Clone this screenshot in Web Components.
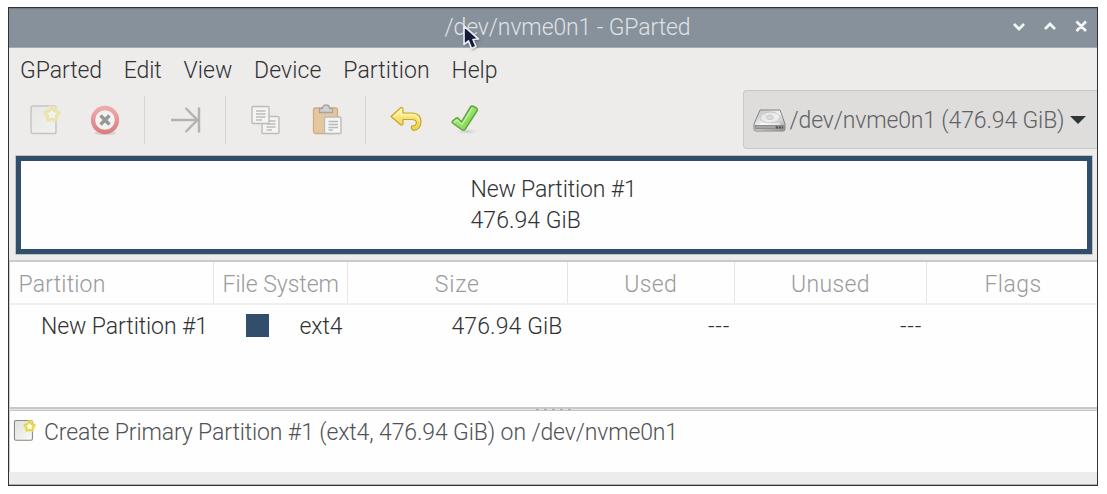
<!DOCTYPE html>
<html lang="en">
<head>
<meta charset="utf-8">
<title>GParted</title>
<style>
body{margin:0;background:#fff;font-family:Roboto,"Liberation Sans",sans-serif;font-weight:300;font-size:23px;color:#303234;width:1107px;height:494px;overflow:hidden}
gp-window{margin:7px 0 0 8px}
</style>
</head>
<body>
<gp-window>
  <gp-titlebar slot="title"></gp-titlebar>
  <gp-menubar></gp-menubar>
  <gp-toolbar></gp-toolbar>
  <gp-diskmap></gp-diskmap>
  <gp-table></gp-table>
  <gp-operations></gp-operations>
</gp-window>
<script>
const define=(name,html)=>customElements.define(name,class extends HTMLElement{
  constructor(){super();this.attachShadow({mode:'open'}).innerHTML=html;}
});
/* A label that spreads its letters over the width given in w */
customElements.define('gp-label',class extends HTMLElement{
  constructor(){super();this.attachShadow({mode:'open'}).innerHTML=`<style>:host{display:block;flex:none;white-space:pre;line-height:32px;height:30px}span{display:inline-block}</style><span><slot></slot></span>`;}
  connectedCallback(){
    const w=+this.getAttribute('w'),s=this.shadowRoot.querySelector('span');
    this.style.width=w+'px';
    s.style.letterSpacing=(w-s.getBoundingClientRect().width)/this.textContent.length+'px';
  }
});
define('gp-window',`<style>:host{display:flex;flex-direction:column;box-sizing:border-box;width:1090px;height:479px;border:1px solid #303236;background:#edecea;overflow:hidden}</style><slot name="title"></slot><slot></slot>`);
define('gp-cursor',`<style>:host{display:block;width:20px;height:28px}svg{display:block;filter:drop-shadow(1px 1px 1px #0004)}</style><svg width="20" height="28" viewBox="0 0 20 28"><path d="M2 2V20.500L6.500 17L9.500 24.500L14 22.500L11 15.500L16.500 15Z" fill="#161b3c" stroke="#e9ecf1" stroke-width="1.700" stroke-linejoin="round"/></svg>`);
define('gp-titlebar',`<style>:host{display:flex;align-items:center;position:relative;box-sizing:border-box;height:40px;flex:none;background:#87919b;border-bottom:1px solid #a4abb3;border-top:1px solid #737c86;color:#dfe2e5;padding:0 0 3px 435.500px}gp-cursor{position:absolute;left:453px;top:15px}.b{margin-left:318px;display:block}</style>
<gp-label w="246">/dev/nvme0n1 - GParted</gp-label><svg class="b" width="82" height="20" viewBox="0 0 82 20" fill="none" stroke="#f4f5f6" stroke-width="2.700"><path d="M5 7L10 12L15 7M36 12L41 7L46 12M67.500 4.500L77 14M77 4.500L67.500 14"/></svg><gp-cursor></gp-cursor>`);
define('gp-menubar',`<style>:host{display:flex;box-sizing:border-box;height:42px;flex:none;padding:7px 0 0 11px;gap:21.700px}</style>
<gp-label w="82">GParted</gp-label><gp-label w="38">Edit</gp-label><gp-label w="49">View</gp-label><gp-label w="67.500">Device</gp-label><gp-label w="86.500">Partition</gp-label><gp-label w="46">Help</gp-label>`);
define('gp-page-icon',`<style>:host{display:block}svg{display:block;width:100%;height:100%;overflow:visible}</style><svg viewBox="0 0 32 32"><defs><linearGradient id="g" x2="1" y2="1"><stop stop-color="#dfe1dc"/><stop offset="1" stop-color="#fafaf9"/></linearGradient></defs><rect x="2" y="2" width="25" height="27.500" rx="2" fill="url(#g)" stroke="#858783" stroke-width="1.500"/><circle cx="23" cy="10" r="8.500" fill="#eee48a" opacity=".65"/><path d="M23 3L25.400 7.200L30.200 8.200L26.900 11.700L27.400 16.500L23 14.500L18.600 16.500L19.100 11.700L15.800 8.200L20.600 7.200Z" fill="#fffde9" stroke="#e3d347" stroke-width="2.200" stroke-linejoin="round"/></svg>`);
define('gp-sep',`<style>:host{display:block;width:1.500px;height:48px;background:#d6d5d3;flex:none;margin-right:.5px}</style>`);
define('gp-drive',`<style>:host{display:flex;align-items:center;box-sizing:border-box;width:354px;height:59px;border:1.500px solid #c9c8c6;border-right:0;border-radius:4px 0 0 4px;background:#dedddb;padding-left:9px;color:#606366;flex:none}gp-label{margin-left:2.500px}.a{margin-left:5.500px}svg{flex:none}</style>
<svg width="34" height="26" viewBox="0 0 34 26"><defs><linearGradient id="d" x2="1" y2="1"><stop stop-color="#bbb"/><stop offset=".5" stop-color="#f4f4f4"/><stop offset="1" stop-color="#999"/></linearGradient></defs><path d="M7 3H27L32 17V22Q32 24 30 24H3Q1 24 1 22V17Z" fill="url(#d)" stroke="#858585"/><path d="M1.500 18H31.500V22.500H2Z" fill="#8d8d8d"/><path d="M3 20H22" stroke="#bcbcbc"/><path d="M23 20.500H30" stroke="#555" stroke-width="2" stroke-dasharray="2 1"/><ellipse cx="17" cy="10.500" rx="10" ry="5.500" fill="#eee" fill-opacity=".5" stroke="#b8b8b8" stroke-opacity=".7"/><ellipse cx="17" cy="10.500" rx="3.500" ry="2" fill="#ddd" stroke="#b4b4b4" stroke-opacity=".6"/><path d="M7 17H27" stroke="#fff"/></svg><gp-label w="275">/dev/nvme0n1 (476.94 GiB)</gp-label><svg class="a" width="16" height="10" viewBox="0 0 16 10"><path d="M0 1H16L8 9Z" fill="#303538"/></svg>`);
define('gp-toolbar',`<style>:host{display:flex;align-items:center;height:59px;flex:none}.i{width:32px;height:32px;flex:none;display:block}gp-page-icon{opacity:.38}gp-drive{margin-left:auto}</style>
<gp-page-icon class="i" style="margin-left:19.500px"></gp-page-icon>
<svg class="i" style="margin-left:28px" viewBox="0 0 32 32"><defs><linearGradient id="r" x2="0" y2="1"><stop stop-color="#edaaaa"/><stop offset="1" stop-color="#d97f82"/></linearGradient></defs><ellipse cx="16" cy="29" rx="11" ry="2" fill="#d6d3d1"/><circle cx="16" cy="16" r="12" fill="#f4f2f1" stroke="url(#r)" stroke-width="4.300"/><path d="M11.500 11.500L20.500 20.500M20.500 11.500L11.500 20.500" stroke="#969895" stroke-width="3.400"/></svg>
<gp-sep style="margin-left:23px"></gp-sep>
<svg class="i" style="margin-left:25px" viewBox="0 0 32 32" fill="none" stroke="#b3b4b2" stroke-width="2.400"><path d="M0 16H26M14.500 4L26.500 16L14.500 28M28 3.500V28.500"/></svg>
<gp-sep style="margin-left:22px"></gp-sep>
<svg class="i" style="margin-left:23px" viewBox="0 0 32 32" fill="#f4f4f2" stroke="#bcbdb9" stroke-width="1.400"><rect x="12" y="12.500" width="17" height="17" rx="1"/><path d="M16.500 17H25.500M16.500 20H25.500M16.500 23H25.500M16.500 26H22"/><rect x="2" y="2.500" width="17" height="17" rx="1"/><path d="M6 7H15.500M6 10H15.500M6 13H15.500M6 16H12"/></svg>
<svg class="i" style="margin-left:29px" viewBox="0 0 32 32"><rect x="2.500" y="4" width="24" height="25.500" rx="2" fill="#e4c79d" stroke="#d0ae7e" stroke-width="1.300"/><path d="M8.500 8.500V4.500H11.500Q11.500 1 15 1T18.500 4.500H21.500V8.500Z" fill="#d1d1cf" stroke="#a5a5a3" stroke-width="1.300"/><rect x="13.500" y="13" width="16.500" height="16.500" rx="1" fill="#f5f5f3" stroke="#bcbdb9" stroke-width="1.400"/><path d="M17.500 17.500H27M17.500 20.500H27M17.500 23.500H27M17.500 26H22" stroke="#b9bab7" stroke-width="1.300"/></svg>
<gp-sep style="margin-left:22px"></gp-sep>
<svg class="i" style="margin-left:23px" viewBox="0 0 32 32"><defs><linearGradient id="y" x2="0" y2="1"><stop stop-color="#fff3a0"/><stop offset="1" stop-color="#edd145"/></linearGradient></defs><path d="M1 12.500L11 3.500Q12.500 3 13 5V9H23Q31 10 31 17.500Q31 26 23 26.500L21.500 24.500V22Q26.500 22 26.500 18.500Q26 15.500 22 15.500H13V19.500Q12.500 21.500 11 21Z" fill="url(#y)" stroke="#c5a62b" stroke-width="1.200" stroke-linejoin="round"/><path d="M4 12.500L11 6V11H22Q28 11 29 17" fill="none" stroke="#fff8bd" stroke-width="1.200"/></svg>
<svg class="i" style="margin-left:28.500px" viewBox="0 0 32 32"><defs><linearGradient id="v" x2="1" y2="1"><stop stop-color="#b5ef8b"/><stop offset="1" stop-color="#75d33f"/></linearGradient><radialGradient id="q"><stop stop-color="#c5c5c3"/><stop offset="1" stop-color="#edecea" stop-opacity="0"/></radialGradient></defs><ellipse cx="17" cy="27.500" rx="14" ry="3.500" fill="url(#q)"/><path d="M2.500 17L6.500 14Q7.500 13.500 8.500 14.500L11.500 18L20.500 3Q21.500 1.500 23 2.200L26.500 4Q28 5 27.200 6.500L15 25.500Q13.500 27 11.500 25.500L2.500 19Q1.500 18 2.500 17Z" fill="url(#v)" stroke="#62a548" stroke-width="1.500"/><path d="M4.500 18L7 16L12 20.500L22 4.500" fill="none" stroke="#c8f4a8" stroke-width="1.300"/></svg>
<gp-drive></gp-drive>`);
define('gp-diskmap',`<style>:host{display:block;box-sizing:border-box;height:98px;margin:7px 5px 0 7px;border:5.500px solid #314e6b;background:#fefefe;flex:none;padding:13px 0 0 449.500px;box-shadow:0 0 0 .6px #9aa8b6}gp-label{height:31px}</style><gp-label w="166">New Partition #1</gp-label><gp-label w="110.500">476.94 GiB</gp-label>`);
define('gp-table',`<style>:host{display:block;flex:none;height:147px;box-sizing:border-box;margin:6px 0 0;border-top:2px solid #cbcac8;border-left:1px solid #ccc;background:#fefefe}
.h,.r{display:grid;grid-template-columns:204px 134px 219.500px 167.500px 192px 1fr;height:42px;box-sizing:border-box}.h{border-bottom:2px solid #f0f0ef;color:#9a9b9c;height:43px}.h>div{border-right:1.500px solid #e6e6e5;display:flex;padding-top:7px}.h>div:last-child{border:0}.c{justify-content:center}.r>div{display:flex;padding-top:6px}.e{justify-content:flex-end}i{width:23px;height:23px;background:#314e6b;margin:3px 30.500px 0 32px}</style>
<div class="h"><div style="padding-left:8.500px"><gp-label w="87">Partition</gp-label></div><div style="padding-left:8.500px"><gp-label w="116.500">File System</gp-label></div><div class="c"><gp-label w="45">Size</gp-label></div><div class="c"><gp-label w="53">Used</gp-label></div><div class="c"><gp-label w="79">Unused</gp-label></div><div class="c" style="padding-left:2px"><gp-label w="57">Flags</gp-label></div></div>
<div class="r"><div style="padding-left:31px"><gp-label w="167">New Partition #1</gp-label></div><div><i></i><gp-label w="43">ext4</gp-label></div><div class="e" style="padding-right:5px"><gp-label w="111">476.94 GiB</gp-label></div><div class="e" style="padding-right:5px"><gp-label w="22">---</gp-label></div><div class="e" style="padding-right:5px"><gp-label w="22">---</gp-label></div><div></div></div>`);
define('gp-operations',`<style>:host{display:flex;flex-direction:column;flex:1}.s{height:4px;box-sizing:border-box;border-top:2px solid #c8c8c5;border-bottom:1px solid #c5c5c2;background:#e5e5e2;display:flex;justify-content:center;align-items:center;gap:5px}.s b{width:3px;height:1px;background:#aaa;flex:none}.l{height:60.500px;background:#fefefe;border-left:1px solid #ccc;display:flex;padding:6px 0 0 3px;box-sizing:border-box}gp-page-icon{width:23px;height:23px;margin-top:2px}gp-label{margin-left:8px;color:#505256}.f{margin-top:auto;height:1px;background:#b2b2b0}</style>
<div class="s"><b></b><b></b><b></b><b></b><b></b></div><div class="l"><gp-page-icon></gp-page-icon><gp-label w="634">Create Primary Partition #1 (ext4, 476.94 GiB) on /dev/nvme0n1</gp-label></div><div class="f"></div>`);
</script>
</body>
</html>
